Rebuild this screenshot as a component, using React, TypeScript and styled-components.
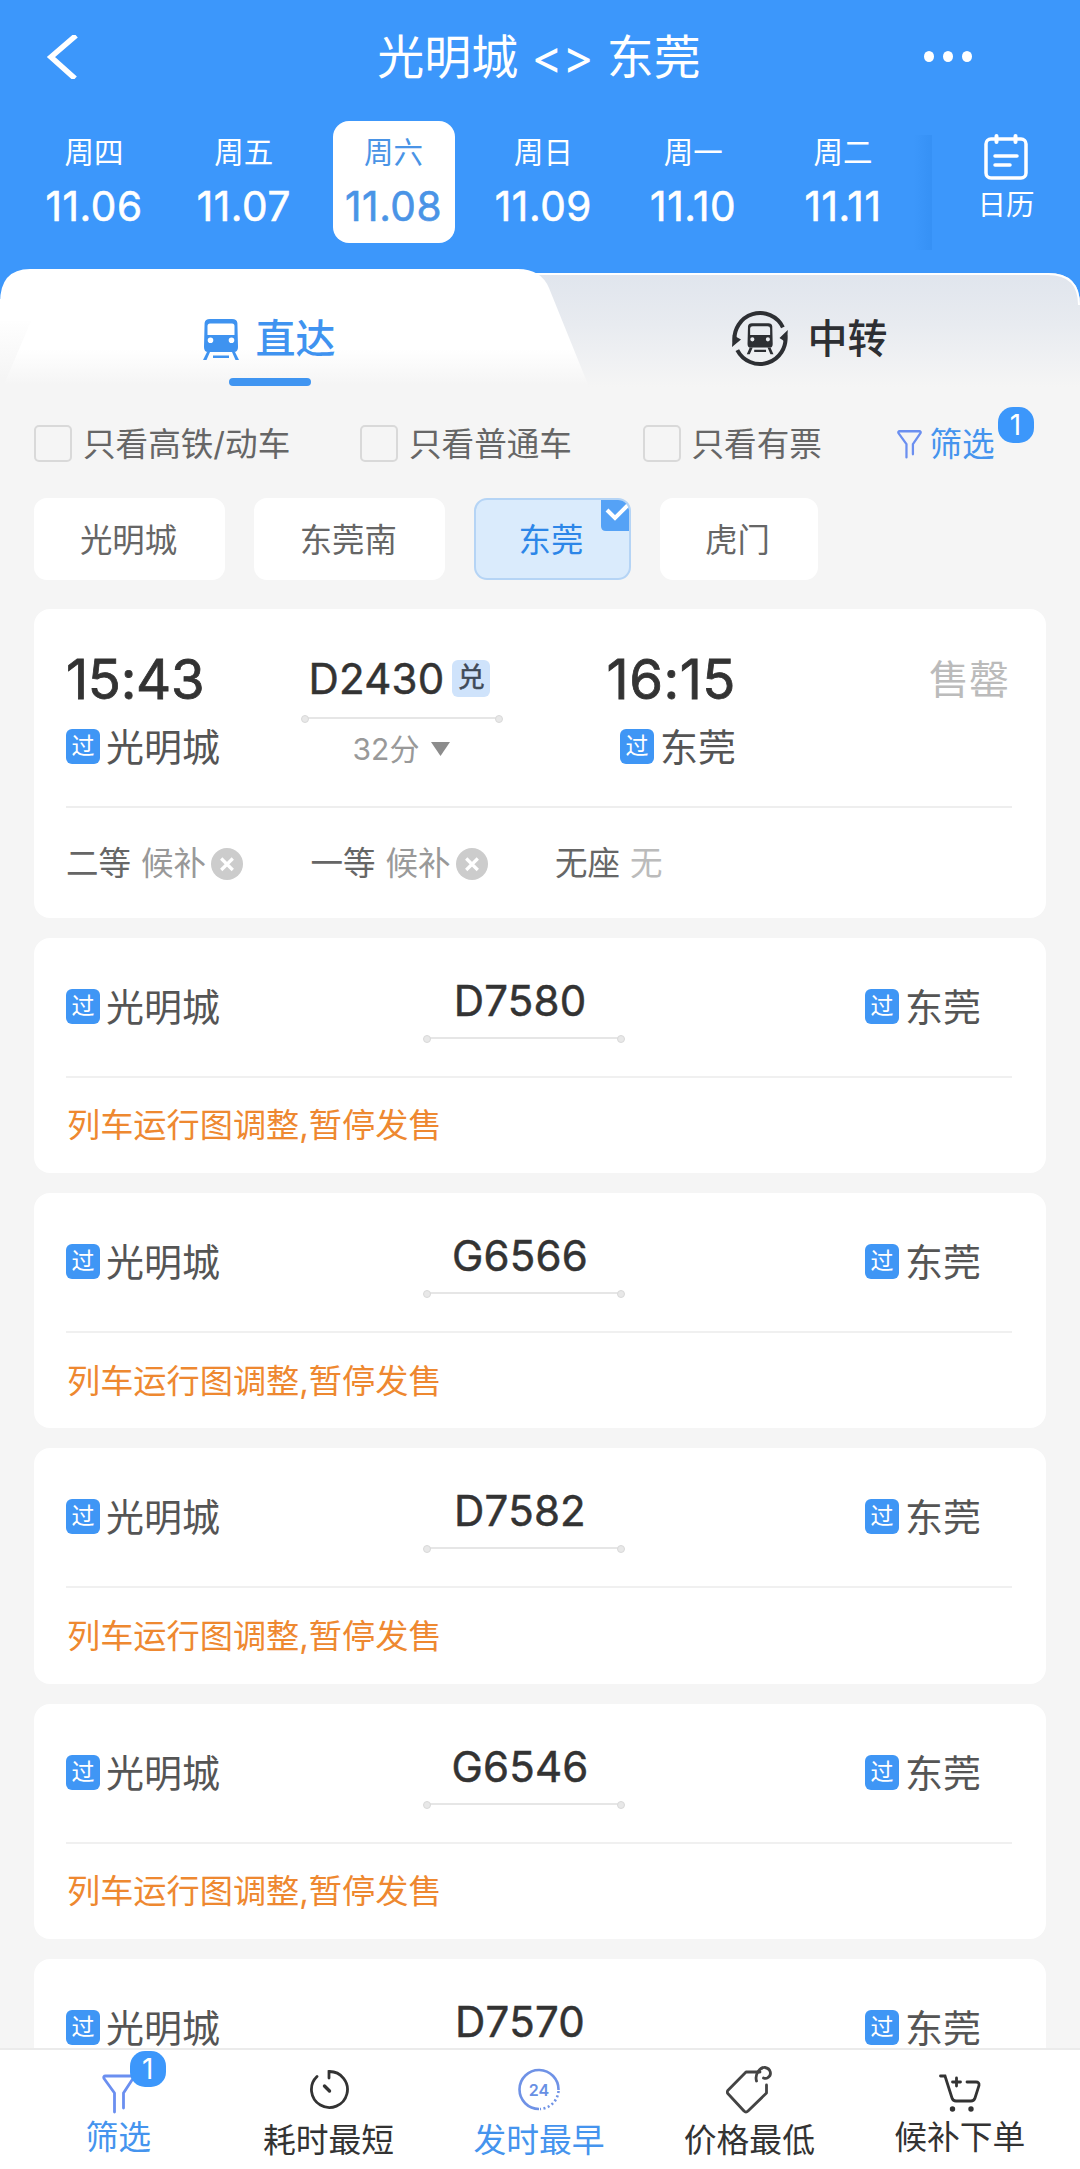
import React from 'react';
import styled, { createGlobalStyle, css } from 'styled-components';

const Global = createGlobalStyle`
  * { box-sizing: border-box; }
  body { margin: 0; background: #f5f5f5; }
`;

const BLUE = '#3c97fb';

const Page = styled.div`
  width: 1080px;
  height: 2169px;
  display: flex;
  flex-direction: column;
  overflow: hidden;
  background: #f5f5f5;
  color: #333;
  font-family: Inter, 'Noto Sans CJK SC', sans-serif;
  white-space: nowrap;
`;

const Header = styled.header`
  height: 269px;
  flex: none;
  background: ${BLUE};
  color: #fff;
`;

const TitleBar = styled.div`
  height: 121px;
  padding: 0 108px 8px 46px;
  display: grid;
  grid-template-columns: 60px 1fr 48px;
  align-items: center;
`;

const Title = styled.h1`
  margin: 0;
  padding-left: 48px;
  text-align: center;
  font-size: 47px;
  line-height: 60px;
  font-weight: 400;
`;

const Dots = styled.div`
  display: flex;
  justify-content: space-between;
  span { width: 10px; height: 11px; border-radius: 50%; background: #fff; }
`;

const DateRow = styled.div`
  display: flex;
  height: 135px;
  padding-left: 33px;
`;

const DateItem = styled.div<{ $on?: boolean }>`
  width: 122px;
  height: 122px;
  margin-right: 27.8px;
  flex: none;
  border-radius: 16px;
  display: flex;
  flex-direction: column;
  align-items: center;
  padding-top: 11px;
  background: ${p => (p.$on ? '#fff' : 'transparent')};
  color: ${p => (p.$on ? '#4a94e6' : '#fff')};
`;

const Week = styled.span`
  font-size: 29.5px;
  line-height: 40px;
`;

const Day = styled.span`
  font-size: 40.5px;
  line-height: 48px;
  margin-top: 11px;
  font-weight: 400;
  letter-spacing: 0.6px;
  -webkit-text-stroke: 0.6px currentColor;
`;

const CalendarBox = styled.div`
  flex: 1;
  margin-top: 12px;
  margin-left: -18px;
  display: grid;
  grid-template-columns: 18px 1fr;
`;

const Shade = styled.div`
  margin: 2px 0 6px;
  background: linear-gradient(90deg, rgba(30, 120, 220, 0), rgba(30, 120, 220, 0.2));
`;

const Calendar = styled.div`
  display: flex;
  flex-direction: column;
  align-items: center;
  padding-top: 1px;
  font-size: 28.5px;
  line-height: 40px;
  svg { display: block; margin-bottom: 5px; }
`;

const Tabs = styled.div`
  height: 118px;
  flex: none;
  display: grid;
  grid-template-columns: 540px 540px;
  position: relative;
  background: ${BLUE};
`;

const TabShape = styled.svg`
  position: absolute;
  left: 0;
  top: 0;
`;

const Tab = styled.div<{ $on?: boolean }>`
  position: relative;
  display: flex;
  justify-content: center;
  align-items: center;
  height: 118px;
  padding: 22px ${p => (p.$on ? 2 : 1)}px 0 0;
  gap: ${p => (p.$on ? 17 : 19)}px;
  font-size: 40px;
  line-height: 56px;
  font-weight: 500;
  color: ${p => (p.$on ? '#3f93f0' : '#2d2f33')};
  ${p => p.$on && css`
    &::after {
      content: '';
      position: absolute;
      left: 229px;
      bottom: 1px;
      width: 82px;
      height: 8px;
      border-radius: 4px;
      background: #4095f1;
    }
  `}
`;

const CheckRow = styled.div`
  display: flex;
  align-items: center;
  height: 72px;
  margin-top: 21px;
  padding-left: 34px;
  flex: none;
  font-size: 32.6px;
  line-height: 48px;
  color: #666;
`;

const Check = styled.label<{ $w: number }>`
  display: flex;
  align-items: center;
  width: ${p => p.$w}px;
  flex: none;
`;

const Box = styled.span`
  width: 38px;
  height: 37px;
  margin: -2px 11px 0 0;
  flex: none;
  border: 2px solid #d9d9d9;
  border-radius: 5px;
`;

const Filter = styled.div`
  position: relative;
  display: flex;
  align-items: center;
  gap: 8px;
  color: #4594ee;
`;

const Badge = styled.span<{ $x: number; $y: number }>`
  position: absolute;
  left: ${p => p.$x}px;
  top: ${p => p.$y}px;
  width: 36px;
  height: 36px;
  border-radius: 15px;
  background: ${BLUE};
  color: #fff;
  font-size: 28px;
  line-height: 36px;
  text-align: center;
`;

const Chips = styled.div`
  display: flex;
  gap: 29px;
  padding: 0 34px;
  margin-top: 18px;
  flex: none;
`;

const Chip = styled.div<{ $w: number; $on?: boolean }>`
  position: relative;
  width: ${p => p.$w}px;
  height: 82px;
  flex: none;
  display: flex;
  align-items: center;
  justify-content: center;
  padding: 0 2px 4px 0;
  border-radius: 13px;
  border: 2px solid ${p => (p.$on ? '#b5d4f5' : '#fff')};
  background: ${p => (p.$on ? '#daebfc' : '#fff')};
  color: ${p => (p.$on ? '#2c86e8' : '#666')};
  font-size: 32.4px;
  overflow: hidden;
`;

const Corner = styled.svg`
  position: absolute;
  right: 0;
  top: 0;
`;

const List = styled.main`
  flex: 1;
  min-height: 0;
  overflow: hidden;
  display: flex;
  flex-direction: column;
  gap: 20px;
  padding: 28.5px 34px 0;
`;

const Card = styled.section<{ $h: number }>`
  height: ${p => p.$h}px;
  flex: none;
  padding: 0 34px 0 32px;
  border-radius: 16px;
  background: #fff;
  display: flex;
  flex-direction: column;
`;

const Trip = styled.div`
  height: 199.5px;
  flex: none;
  display: grid;
  grid-template-columns: 236px 200px 234px 1fr;
  padding-top: 45px;
  border-bottom: 2px solid #eee;
`;

const Col = styled.div<{ $align?: string }>`
  display: flex;
  flex-direction: column;
  align-items: ${p => p.$align || 'flex-start'};
`;

const Time = styled.div<{ $track: number }>`
  font-size: 54.5px;
  line-height: 60px;
  height: 60px;
  margin-top: -5px;
  font-weight: 400;
  letter-spacing: ${p => p.$track}px;
  -webkit-text-stroke: 0.8px currentColor;
`;

const Station = styled.div`
  display: flex;
  align-items: center;
  height: 40px;
  margin-top: 18px;
  font-size: 38px;
  line-height: 40px;
  color: #555;
`;

const StationName = styled.span`
  padding-top: 1px;
`;

const Pass = styled.span`
  width: 34px;
  height: 35px;
  margin-right: 6px;
  border-radius: 6px;
  background: #3f96f5;
  color: #fff;
  font-size: 23px;
  line-height: 34px;
  text-align: center;
`;

const TrainNo = styled.div`
  display: flex;
  align-items: center;
  height: 50px;
  margin-right: 5px;
  font-size: 42px;
  line-height: 50px;
  font-weight: 400;
  letter-spacing: 0.2px;
  -webkit-text-stroke: 0.5px currentColor;
  color: #333;
`;

const Exchange = styled.span`
  width: 38px;
  height: 37px;
  margin-left: 8px;
  border-radius: 6px;
  background: #cfe3fb;
  color: #3f4a58;
  font-size: 27px;
  line-height: 36px;
  text-align: center;
`;

const Link = styled.div`
  position: relative;
  width: 200px;
  height: 2px;
  background: #e6e6e6;
  &::before, &::after {
    content: '';
    position: absolute;
    top: -2px;
    width: 6px;
    height: 6px;
    border-radius: 50%;
    border: 1px solid #d9d9d9;
    background: #e8e8e8;
  }
  &::before { left: -1px; }
  &::after { right: -1px; }
`;

const Duration = styled.div`
  display: flex;
  align-items: center;
  gap: 11px;
  margin-top: 9px;
  font-size: 30px;
  line-height: 42px;
  color: #999;
`;

const SoldOut = styled.div`
  font-size: 40px;
  line-height: 52px;
  padding: 0 3px 0 0;
  color: #bbb;
`;

const Seats = styled.div`
  flex: 1;
  display: grid;
  grid-template-columns: 244.5px 244.5px 1fr;
  align-items: center;
  padding-top: 2px;
  font-size: 32.5px;
  line-height: 44px;
  color: #666;
`;

const Seat = styled.div`
  display: flex;
  align-items: center;
  gap: 10px;
`;

const SeatState = styled.span<{ $none?: boolean }>`
  display: flex;
  align-items: center;
  gap: 5px;
  color: ${p => (p.$none ? '#bbb' : '#999')};
`;

const SmallTrip = styled.div`
  height: 140px;
  flex: none;
  display: grid;
  grid-template-columns: 358px 200px 241px 1fr;
  border-bottom: 2px solid #f0f0f0;
  ${Station} { margin-top: 48.5px; }
  ${TrainNo} { margin: 38px 8px 11px 0; }
`;

const Notice = styled.div`
  flex: 1;
  display: flex;
  align-items: center;
  padding-left: 1px;
  font-size: 33.2px;
  line-height: 46px;
  color: #ee8830;
`;

const BottomBar = styled.nav`
  height: 121px;
  flex: none;
  display: grid;
  grid-template-columns: repeat(5, 210.4px);
  padding-left: 13px;
  border-top: 2px solid #ebebeb;
  background: #fff;
`;

const BarItem = styled.div<{ $on?: boolean; $up?: boolean }>`
  display: flex;
  flex-direction: column;
  align-items: center;
  padding-top: 14px;
  font-size: 32.8px;
  line-height: 44px;
  color: ${p => (p.$on ? '#4594ee' : '#333')};
  svg { display: block; }
  span.label { margin-top: ${p => (p.$up ? -1 : 2)}px; }
`;

const BarIcon = styled.div`
  position: relative;
  height: 52px;
  flex: none;
`;

const Train = ({ w, h }: { w: number; h: number }) => (
  <svg width={w} height={h} viewBox="0 0 36 41" fill="currentColor">
    <path fillRule="evenodd" d="M7 0H29Q34 0 34.4 4L35 28Q35 33 31 33H5Q1 33 1 28L1.6 4Q2 0 7 0ZM7 4.500Q4.500 4.500 4.500 7V16H31.500V7Q31.500 4.500 29 4.500ZM7.500 18.500A2.800 2.800 0 1 0 7.500 24.100A2.800 2.800 0 1 0 7.500 18.500ZM28.500 18.500A2.800 2.800 0 1 0 28.500 24.100A2.800 2.800 0 1 0 28.500 18.500Z" />
    <path d="M4 33L0 41H3.500L7 33ZM32 33L36 41H32.500L29 33ZM10 36.500H26V39H10Z" />
  </svg>
);

const Transfer = () => (
  <svg width="57" height="56" viewBox="0 0 57 56" fill="none" stroke="currentColor">
    <path strokeWidth="4" d="M2.750 31A25.500 25.500 0 0 1 50.900 16.300" />
    <path strokeWidth="4" d="M53.250 24A25.500 25.500 0 0 1 5.300 39.100" />
    <path fill="currentColor" stroke="none" d="M0.800 24L9 28.500L0 36ZM55.800 19L47.500 27L55 32Z" />
    <g transform="translate(14.800 12.200) scale(.74)" fill="currentColor" stroke="none">
      <path fillRule="evenodd" d="M7 0H29Q34 0 34.4 4L35 28Q35 33 31 33H5Q1 33 1 28L1.6 4Q2 0 7 0ZM8 4Q4.500 4 4.500 7V16H31.500V7Q31.500 4 28 4ZM7.500 19A2.800 2.800 0 1 0 7.500 24.600A2.800 2.800 0 1 0 7.500 19ZM28.500 19A2.800 2.800 0 1 0 28.500 24.600A2.800 2.800 0 1 0 28.500 19Z" />
      <path d="M4 33L0 42H4L8 33ZM32 33L36 42H32L28 33ZM10 36H26V39H10Z" />
    </g>
  </svg>
);

const Funnel = ({ w, h }: { w: number; h: number }) => (
  <svg width={w} height={h} viewBox="0 0 33 38" fill="none" stroke="#6b8ff0" strokeWidth="3" strokeLinecap="round" strokeLinejoin="round">
    <path d="M12.500 36V18.500L2 4Q1 1.500 3.500 1.500H29.500Q32 1.500 31 4L21 18.500V32" />
  </svg>
);

const Cross = () => (
  <svg width="32" height="32" viewBox="0 0 32 32">
    <circle cx="16" cy="16" r="16" fill="#ccc" />
    <path d="M10.200 10.500L21.800 22M21.800 10.500L10.200 22" stroke="#fff" strokeWidth="3.200" />
  </svg>
);

const DATES = [
  ['周四', '11.06'], ['周五', '11.07'], ['周六', '11.08'],
  ['周日', '11.09'], ['周一', '11.10'], ['周二', '11.11'],
];

const SUSPENDED = '列车运行图调整,暂停发售';

const TRAINS = [
  { no: 'D7580', notice: SUSPENDED },
  { no: 'G6566', notice: SUSPENDED },
  { no: 'D7582', notice: SUSPENDED },
  { no: 'G6546', notice: SUSPENDED },
  { no: 'D7570', notice: '' },
];

const Stop = ({ name }: { name: string }) => (
  <Station><Pass>过</Pass><StationName>{name}</StationName></Station>
);

export default function App() {
  return (
    <Page>
      <Global />
      <Header>
        <TitleBar>
          <svg width="34" height="44" viewBox="0 0 34 44" fill="none" stroke="#fff" strokeWidth="5.500">
            <path d="M30 0.500L5 22L29 43.500" />
          </svg>
          <Title>光明城 &lt;&gt; 东莞</Title>
          <Dots><span /><span /><span /></Dots>
        </TitleBar>
        <DateRow>
          {DATES.map(([w, d], i) => (
            <DateItem key={d} $on={i === 2}>
              <Week>{w}</Week>
              <Day>{d}</Day>
            </DateItem>
          ))}
          <CalendarBox>
            <Shade />
            <Calendar>
              <svg width="44" height="46" viewBox="0 0 44 46" fill="none" stroke="#fff" strokeWidth="3.500" strokeLinecap="round">
                <rect x="2" y="5" width="40" height="39" rx="5" />
                <path d="M12.500 2V8M31.500 2V8" strokeWidth="4" />
                <path d="M11 22H33M11 31H26" />
              </svg>
              日历
            </Calendar>
          </CalendarBox>
        </DateRow>
      </Header>

      <Tabs>
        <TabShape width="1080" height="118" viewBox="0 0 1080 118">
          <defs>
            <linearGradient id="idle" x1="0" y1="0" x2="0" y2="1">
              <stop offset="0" stopColor="#e0e5ed" />
              <stop offset="0.450" stopColor="#e8ebf0" />
              <stop offset="1" stopColor="#f5f5f5" />
            </linearGradient>
            <linearGradient id="active" x1="0" y1="0" x2="0" y2="1">
              <stop offset="0" stopColor="#fff" />
              <stop offset="0.680" stopColor="#fff" />
              <stop offset="0.980" stopColor="#f5f5f5" />
            </linearGradient>
            <linearGradient id="edge" x1="0" y1="0" x2="0" y2="1">
              <stop offset="0.200" stopColor="#fff" />
              <stop offset="0.900" stopColor="#f5f5f5" />
            </linearGradient>
          </defs>
          <path d="M500 4H1048Q1080 4 1080 36V118H500Z" fill="url(#idle)" />
          <path d="M500 5H1048Q1079 5 1079 36" fill="none" stroke="#fff" strokeWidth="2" />
          <path d="M0 30V118H60V30Z" fill="url(#edge)" />
          <path d="M0 34Q0 0 30 0H518Q541 0 549 19L589 118H3L31 52L0 52Z" fill="url(#active)" />
        </TabShape>
        <Tab $on><Train w={36} h={41} />直达</Tab>
        <Tab><Transfer />中转</Tab>
      </Tabs>

      <CheckRow>
        <Check $w={326}><Box />只看高铁/动车</Check>
        <Check $w={282.5}><Box />只看普通车</Check>
        <Check $w={254}><Box />只看有票</Check>
        <Filter><Funnel w={25} h={29} />筛选<Badge $x={101} $y={-13}>1</Badge></Filter>
      </CheckRow>

      <Chips>
        <Chip $w={191}>光明城</Chip>
        <Chip $w={190.5}>东莞南</Chip>
        <Chip $w={157} $on>
          东莞
          <Corner width="28" height="31" viewBox="0 0 28 31">
            <path d="M0 0H28V31H5Q0 31 0 26Z" fill="#55a2f6" />
            <path d="M6 10L14 18L27 5" fill="none" stroke="#fff" strokeWidth="4" />
          </Corner>
        </Chip>
        <Chip $w={158}>虎门</Chip>
      </Chips>

      <List>
        <Card $h={309}>
          <Trip>
            <Col>
              <Time $track={-0.3}>15:43</Time>
              <Stop name="光明城" />
            </Col>
            <Col $align="center">
              <TrainNo>D2430<Exchange>兑</Exchange></TrainNo>
              <Link style={{ marginTop: 13 }} />
              <Duration>
                32分
                <svg width="21" height="14" viewBox="0 0 21 14"><path d="M1 0H20L10.500 14Z" fill="#8c8c8c" /></svg>
              </Duration>
            </Col>
            <Col $align="flex-end">
              <Time $track={0.5}>16:15</Time>
              <Stop name="东莞" />
            </Col>
            <Col $align="flex-end"><SoldOut>售罄</SoldOut></Col>
          </Trip>
          <Seats>
            <Seat>二等<SeatState>候补<Cross /></SeatState></Seat>
            <Seat>一等<SeatState>候补<Cross /></SeatState></Seat>
            <Seat>无座<SeatState $none>无</SeatState></Seat>
          </Seats>
        </Card>
        {TRAINS.map(({ no, notice }) => (
          <Card key={no} $h={235.4}>
            <SmallTrip>
              <Stop name="光明城" />
              <Col $align="center">
                <TrainNo>{no}</TrainNo>
                <Link />
              </Col>
              <span />
              <Stop name="东莞" />
            </SmallTrip>
            {notice && <Notice>{notice}</Notice>}
          </Card>
        ))}
      </List>

      <BottomBar>
        <BarItem $on $up>
          <BarIcon>
            <svg width="33" height="52" viewBox="0 0 33 52" fill="none" stroke="#6b8ff0" strokeWidth="2.800" strokeLinecap="round" strokeLinejoin="round">
              <path d="M12.500 48V29L2 14.500Q1 12 3.500 12H29.500Q32 12 31 14.500L21.500 29V44" />
            </svg>
            <Badge $x={28} $y={-13}>1</Badge>
          </BarIcon>
          <span className="label">筛选</span>
        </BarItem>
        <BarItem>
          <BarIcon>
            <svg width="40" height="52" viewBox="0 0 40 52" fill="none" stroke="#333" strokeWidth="2.800" strokeLinecap="round">
              <path d="M20 14V7.500A18 18 0 1 1 8 12.500" />
              <path d="M15.500 22L20.500 27" strokeWidth="3.400" />
            </svg>
          </BarIcon>
          <span className="label">耗时最短</span>
        </BarItem>
        <BarItem $on>
          <BarIcon>
            <svg width="42" height="52" viewBox="0 0 42 52" fill="none" stroke="#6f92e6" strokeWidth="2.600">
              <path d="M21 45A19.500 19.500 0 1 1 40.500 26" />
              <path d="M40.500 27A19.500 19.500 0 0 1 22 45" strokeDasharray="2 2.500" />
              <text x="21" y="32" textAnchor="middle" fontSize="16" fontWeight="600" fill="#6890e4" stroke="none">24</text>
            </svg>
          </BarIcon>
          <span className="label">发时最早</span>
        </BarItem>
        <BarItem>
          <BarIcon>
            <svg width="46" height="52" viewBox="0 0 46 52" fill="none" stroke="#444" strokeWidth="2.800" strokeLinecap="round" strokeLinejoin="round">
              <path d="M34 8H20L1.800 26.500Q0.800 28 1.800 29.500L18 47Q20 49 22 47L40.500 29V21" />
              <path d="M30.500 17C28.500 10 34 3 39 3.500C45 4.500 46 11 42 13.500Q40 15 37.500 14" />
            </svg>
          </BarIcon>
          <span className="label">价格最低</span>
        </BarItem>
        <BarItem $up>
          <BarIcon>
            <svg width="42" height="52" viewBox="0 0 42 52" fill="none" stroke="#333" strokeWidth="2.800" strokeLinecap="round">
              <path d="M1.500 12H6L13 34Q14 37 17 37H32Q35 37 36 34L40 21.500Q40.500 18 37 18H28M13.500 18H21.500M17.500 14V22" />
              <circle cx="13.500" cy="45" r="1.300" fill="#333" />
              <circle cx="32" cy="45" r="1.300" fill="#333" />
            </svg>
          </BarIcon>
          <span className="label">候补下单</span>
        </BarItem>
      </BottomBar>
    </Page>
  );
}
